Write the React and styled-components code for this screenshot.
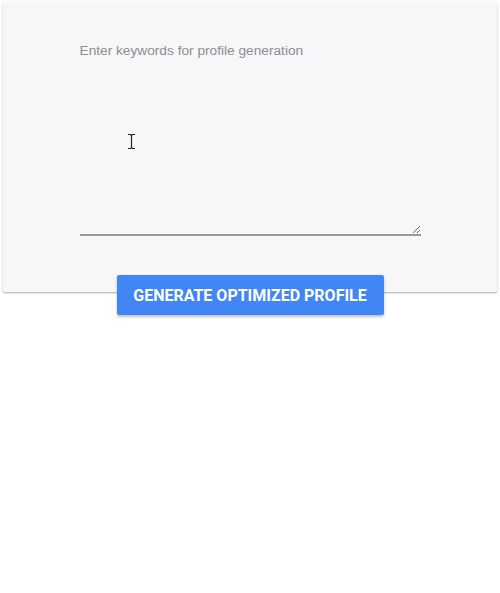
import React from "react";
import styled, { createGlobalStyle } from "styled-components";

const Global = createGlobalStyle`
  html, body { margin: 0; padding: 0; background: #ffffff; }
  body { font-family: "Liberation Sans", Arial, sans-serif; }
  textarea::placeholder { color: #8e8e93; opacity: 1; }
`;

const Page = styled.div`
  display: flex;
  flex-direction: column;
  align-items: center;
  padding-top: 2px;
  width: 500px;
  height: 593px;
  box-sizing: border-box;
`;

const Card = styled.div`
  position: relative;
  width: 494px;
  height: 290px;
  box-sizing: border-box;
  background: #f7f6f9;
  border-radius: 2px;
  box-shadow: 0 1px 3px rgba(0, 0, 0, 0.22), 0 1px 1px rgba(0, 0, 0, 0.12);
  display: flex;
  justify-content: center;
  padding-top: 37px;
`;

const Keywords = styled.textarea`
  width: 341px;
  height: 197px;
  box-sizing: border-box;
  border: none;
  border-bottom: 2px solid #9a9a9e;
  background: transparent;
  padding: 3px 0 0 0;
  margin: 0;
  font-family: "Liberation Sans", Arial, sans-serif;
  font-size: 13.7px;
  line-height: 17px;
  color: #333;
  outline: none;
  resize: vertical;
`;

const Cursor = styled.svg`
  position: absolute;
  left: 124px;
  top: 131px;
  pointer-events: none;
`;

const GenerateButton = styled.button`
  position: relative;
  z-index: 1;
  margin-top: -17px;
  width: 267px;
  height: 40px;
  border: none;
  border-radius: 2px;
  background: #4285f4;
  color: #ffffff;
  font-family: Roboto, "Liberation Sans", sans-serif;
  font-weight: 700;
  font-size: 16px;
  letter-spacing: 0;
  text-transform: uppercase;
  box-shadow: 0 2px 3px rgba(0, 0, 0, 0.25);
  cursor: pointer;
  padding: 0;
`;

export default function App() {
  return (
    <>
      <Global />
      <Page>
        <Card>
          <Keywords placeholder="Enter keywords for profile generation" />
          <Cursor width="9" height="17" viewBox="0 0 9 17">
            <path d="M1 1.5h2.5l1 1 1-1H8M1 15.5h2.5l1-1 1 1H8M4.5 2.5v12" stroke="#222" strokeWidth="1.2" fill="none" />
          </Cursor>
        </Card>
        <GenerateButton>Generate optimized profile</GenerateButton>
      </Page>
    </>
  );
}
